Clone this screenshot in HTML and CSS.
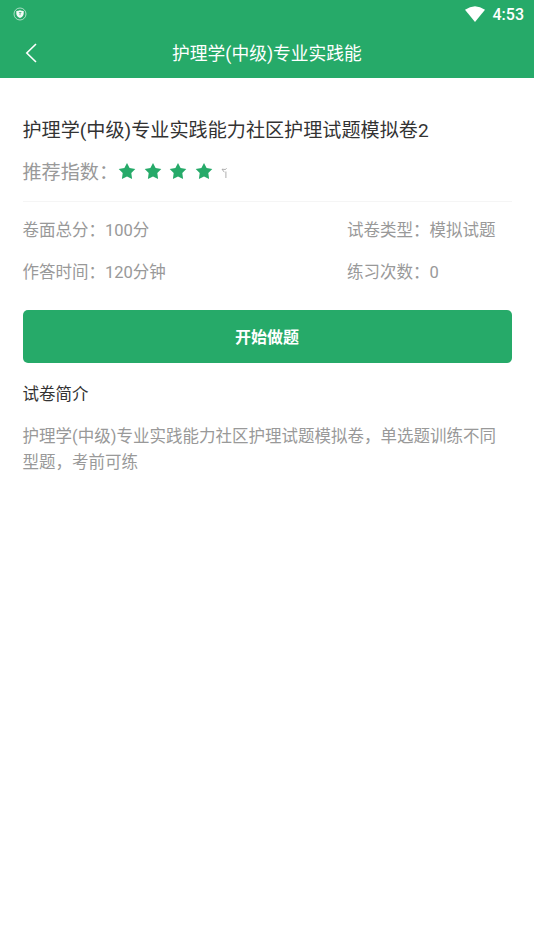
FILE: index.html
```html
<!DOCTYPE html>
<html lang="zh-CN">
<head>
<meta charset="utf-8">
<title>护理学(中级)专业实践能</title>
<link rel="stylesheet" href="styles.css">
</head>
<body>
<header>
<div class="status">
<svg class="shield" viewBox="0 0 14 14"><circle cx="7" cy="7" r="6" fill="none" stroke="#fff" stroke-opacity=".75" stroke-width=".8"/><path d="M7 3.200q1.500.8 3.700.8v2.500Q10.500 9.500 7 11 3.500 9.500 3.300 6.500V4Q5.500 4 7 3.200z" fill="#fff" fill-opacity=".95"/><path d="M5.900 5.500h2.200L7 6.700v1.500" fill="none" stroke="#26aa69" stroke-width=".7"/></svg>
<svg class="wifi" viewBox="0 0 20 16"><path d="M0 3.800Q10-3.400 20 3.800L10 16z" fill="#fff"/></svg>
<span class="clock">4:53</span>
</div>
<nav class="bar">
<svg class="back" viewBox="0 0 14 20"><path d="M12 1L2.800 10 12 19" fill="none" stroke="#fff" stroke-width="1.600"/></svg>
<div class="heading">护理学(中级)专业实践能</div>
</nav>
</header>
<main>
<h1>护理学(中级)专业实践能力社区护理试题模拟卷2</h1>
<div class="rating"><span>推荐指数：</span>
<svg class="star" viewBox="0 0 18 18"><path d="M9 1l2.600 4.900 5.700 1.100-4 4.100.8 5.800L9 14.400l-5.100 2.500.8-5.800-4-4.100 5.700-1.100z"/></svg>
<svg class="star" viewBox="0 0 18 18"><path d="M9 1l2.600 4.900 5.700 1.100-4 4.100.8 5.800L9 14.400l-5.100 2.500.8-5.800-4-4.100 5.700-1.100z"/></svg>
<svg class="star" viewBox="0 0 18 18"><path d="M9 1l2.600 4.900 5.700 1.100-4 4.100.8 5.800L9 14.400l-5.100 2.500.8-5.800-4-4.100 5.700-1.100z"/></svg>
<svg class="star" viewBox="0 0 18 18"><path d="M9 1l2.600 4.900 5.700 1.100-4 4.100.8 5.800L9 14.400l-5.100 2.500.8-5.800-4-4.100 5.700-1.100z"/></svg>
<svg class="half" viewBox="0 0 6 12"><path d="M5.500 1.200L4.500 2.500 1 2.200 3.300 5.200M4.900 4.500v6.500" fill="none" stroke="#999" stroke-width=".8"/></svg>
</div>
<div class="info">
<span>卷面总分：100分</span><span>试卷类型：模拟试题</span>
<span>作答时间：120分钟</span><span>练习次数：0</span>
</div>
<button>开始做题</button>
<h2>试卷简介</h2>
<p>护理学(中级)专业实践能力社区护理试题模拟卷，单选题训练不同型题，考前可练</p>
</main>
</body>
</html>
```
FILE: styles.css
```css
* { box-sizing: border-box; }
body { margin: 0; height: 949px; background: #fff; font-family: Roboto, "Noto Sans CJK SC", sans-serif; color: #333; }
header { height: 78px; background: #26aa69; color: #fff; }
.status { height: 28px; display: flex; align-items: center; padding: 0 10px 0 13px; }
.shield { width: 14px; height: 14px; }
.wifi { width: 20px; height: 16px; margin-left: auto; margin-right: 8px; }
.clock { font-size: 16px; font-weight: 500; line-height: 28px; padding-top: 1px; }
.bar { height: 50px; display: grid; grid-template-columns: 60px 1fr 60px; align-items: center; }
.back { width: 14px; height: 20px; margin-left: 24px; }
.heading { font-size: 17.750px; text-align: center; padding-bottom: 2px; }
main { padding: 38px 22.500px 0; }
h1 { margin: 0; font-size: 19.130px; font-weight: 400; line-height: 30px; white-space: nowrap; }
.rating { height: 56px; display: flex; align-items: center; padding-bottom: 5px; border-bottom: 1px solid #f5f5f5; font-size: 19.130px; color: #999; }
.rating span { width: 95.500px; white-space: nowrap; }
.star { width: 18px; height: 18px; fill: #26aa69; margin-right: 7.700px; }
.half { width: 6px; height: 12px; margin-top: 3px; }
.info { display: grid; grid-template-columns: 324.500px 1fr; grid-auto-rows: 42px; align-items: center; padding: 6px 0 0; font-size: 16.500px; color: #999; white-space: nowrap; }
button { display: block; width: 100%; height: 53px; margin-top: 18px; padding: 0 0 2px; border: 0; border-radius: 5px; background: #26aa69; color: #fff; font: 700 16px Roboto, "Noto Sans CJK SC", sans-serif; }
h2 { margin: 19px 0 16px; font-size: 16.500px; font-weight: 400; line-height: 26px; }
p { margin: 0; font-size: 16.500px; line-height: 26px; color: #999; }
```
